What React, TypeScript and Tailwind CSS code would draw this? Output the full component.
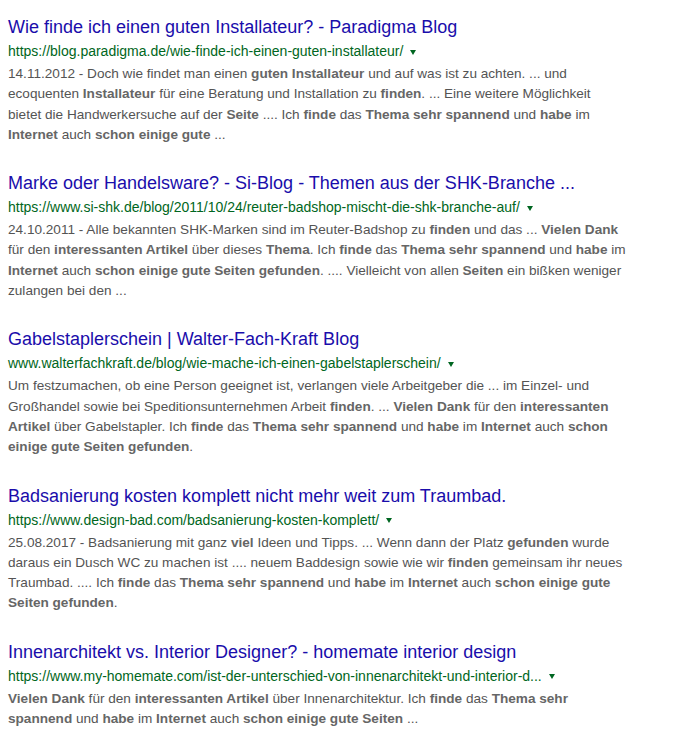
import React from "react";

const results: { title: string; url: string; lines: string[] }[] = [
  {
    title: "Wie finde ich einen guten Installateur? - Paradigma Blog",
    url: "https://blog.paradigma.de/wie-finde-ich-einen-guten-installateur/",
    lines: [
      "14.11.2012 - Doch wie findet man einen **guten Installateur** und auf was ist zu achten. ... und",
      "ecoquenten **Installateur** für eine Beratung und Installation zu **finden**. ... Eine weitere Möglichkeit",
      "bietet die Handwerkersuche auf der **Seite** .... Ich **finde** das **Thema sehr spannend** und **habe** im",
      "**Internet** auch **schon einige gute** ...",
    ],
  },
  {
    title: "Marke oder Handelsware? - Si-Blog - Themen aus der SHK-Branche ...",
    url: "https://www.si-shk.de/blog/2011/10/24/reuter-badshop-mischt-die-shk-branche-auf/",
    lines: [
      "24.10.2011 - Alle bekannten SHK-Marken sind im Reuter-Badshop zu **finden** und das ... **Vielen Dank**",
      "für den **interessanten Artikel** über dieses **Thema**. Ich **finde** das **Thema sehr spannend** und **habe** im",
      "**Internet** auch **schon einige gute Seiten gefunden**. .... Vielleicht von allen **Seiten** ein bißken weniger",
      "zulangen bei den ...",
    ],
  },
  {
    title: "Gabelstaplerschein | Walter-Fach-Kraft Blog",
    url: "www.walterfachkraft.de/blog/wie-mache-ich-einen-gabelstaplerschein/",
    lines: [
      "Um festzumachen, ob eine Person geeignet ist, verlangen viele Arbeitgeber die ... im Einzel- und",
      "Großhandel sowie bei Speditionsunternehmen Arbeit **finden**. ... **Vielen Dank** für den **interessanten**",
      "**Artikel** über Gabelstapler. Ich **finde** das **Thema sehr spannend** und **habe** im **Internet** auch **schon**",
      "**einige gute Seiten gefunden**.",
    ],
  },
  {
    title: "Badsanierung kosten komplett nicht mehr weit zum Traumbad.",
    url: "https://www.design-bad.com/badsanierung-kosten-komplett/",
    lines: [
      "25.08.2017 - Badsanierung mit ganz **viel** Ideen und Tipps. ... Wenn dann der Platz **gefunden** wurde",
      "daraus ein Dusch WC zu machen ist .... neuem Baddesign sowie wie wir **finden** gemeinsam ihr neues",
      "Traumbad. .... Ich **finde** das **Thema sehr spannend** und **habe** im **Internet** auch **schon einige gute**",
      "**Seiten gefunden**.",
    ],
  },
  {
    title: "Innenarchitekt vs. Interior Designer? - homemate interior design",
    url: "https://www.my-homemate.com/ist-der-unterschied-von-innenarchitekt-und-interior-d...",
    lines: [
      "**Vielen Dank** für den **interessanten Artikel** über Innenarchitektur. Ich **finde** das **Thema sehr**",
      "**spannend** und **habe** im **Internet** auch **schon einige gute Seiten** ...",
    ],
  },
];

function Line({ text }: { text: string }) {
  const parts = text.split("**");
  return (
    <div className="whitespace-pre">
      {parts.map((p, i) =>
        i % 2 === 1 ? (
          <b key={i} className="font-bold text-[#666666]">
            {p}
          </b>
        ) : (
          <span key={i}>{p}</span>
        )
      )}
    </div>
  );
}

export default function App() {
  return (
    <div
      className="w-[700px] h-[733px] bg-white pl-2 pt-[16px]"
      style={{ fontFamily: '"Liberation Sans", Arial, sans-serif' }}
    >
      <div className="flex flex-col gap-[27px]">
        {results.map((r, i) => (
          <div key={i} className="w-[600px]">
            <div className="text-[18px] leading-[23px] text-[#1a0dab] whitespace-nowrap">
              {r.title}
            </div>
            <div className="mt-[1px] text-[14px] leading-[23px] text-[#006621] whitespace-nowrap flex items-center">
              <span>{r.url}</span>
              <span className="ml-[7px] mt-[1px] inline-block w-0 h-0 border-l-[3.5px] border-r-[3.5px] border-t-[5px] border-l-transparent border-r-transparent border-t-[#006621]" />
            </div>
            <div className="mt-[1px] text-[13.6px] leading-[20.3px] text-[#545454]">
              {r.lines.map((l, j) => (
                <Line key={j} text={l} />
              ))}
            </div>
          </div>
        ))}
      </div>
    </div>
  );
}
